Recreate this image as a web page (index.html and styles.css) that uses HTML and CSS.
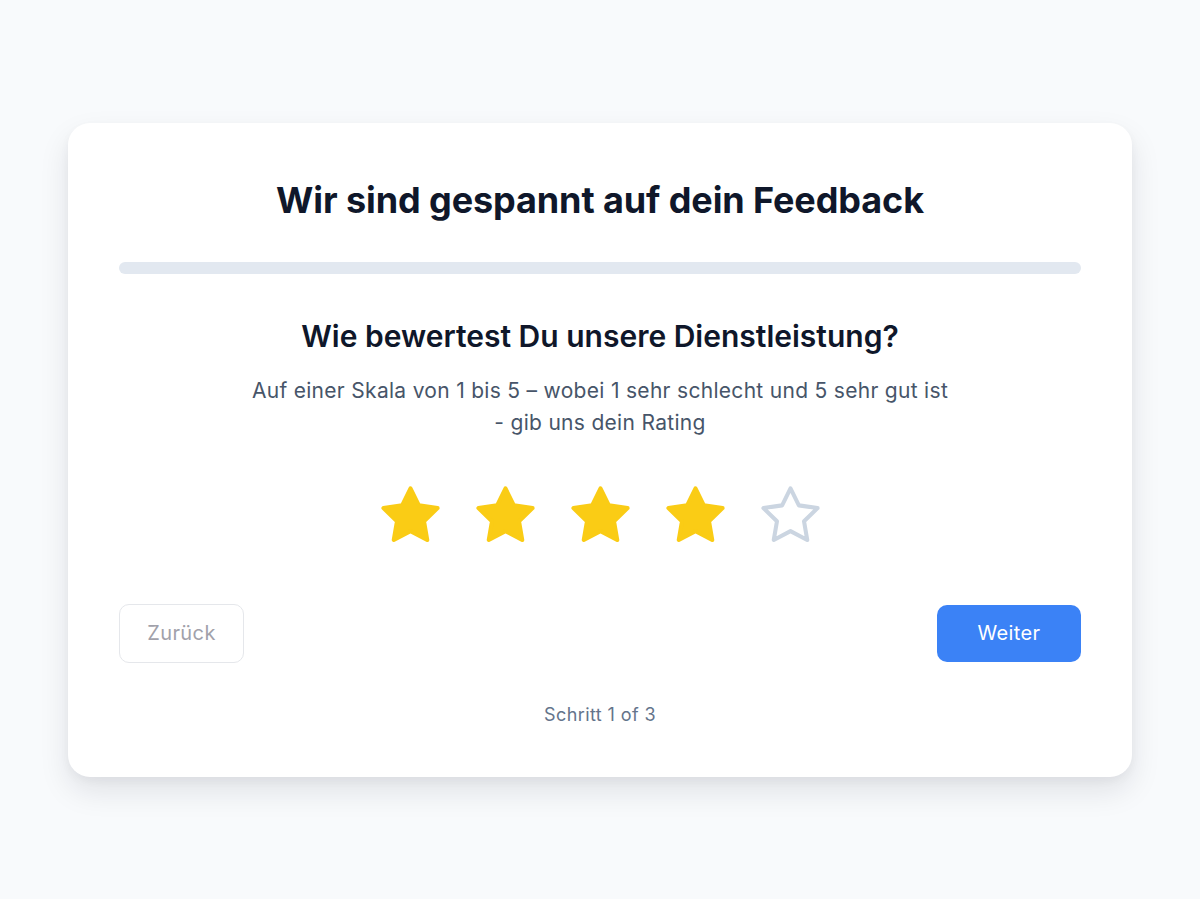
FILE: index.html
```html
<!DOCTYPE html>
<html lang="de">
  <head>
    <meta charset="UTF-8" />
    <meta name="viewport" content="width=device-width, initial-scale=1.0" />
    <title>Feedback</title>
    <link rel="stylesheet" href="styles.css">
  </head>

  <body>
    <main class="feedback-karte">
      <h1 class="titel">Wir sind gespannt auf dein Feedback</h1>

      <!-- Fortschrittsbalken (Schritt 1 noch ohne Füllung) -->
      <div class="fortschritt"><div class="fortschritt-fuellung"></div></div>

      <h2 class="frage">Wie bewertest Du unsere Dienstleistung?</h2>
      <p class="beschreibung">
        Auf einer Skala von 1 bis 5 – wobei 1 sehr schlecht und 5 sehr gut ist
        - gib uns dein Rating
      </p>

      <div class="sterne">
        <svg class="stern aktiv" viewBox="0 0 24 24"><polygon points="12 2 15.09 8.26 22 9.27 17 14.14 18.18 21.02 12 17.77 5.82 21.02 7 14.14 2 9.27 8.91 8.26 12 2" /></svg>
        <svg class="stern aktiv" viewBox="0 0 24 24"><polygon points="12 2 15.09 8.26 22 9.27 17 14.14 18.18 21.02 12 17.77 5.82 21.02 7 14.14 2 9.27 8.91 8.26 12 2" /></svg>
        <svg class="stern aktiv" viewBox="0 0 24 24"><polygon points="12 2 15.09 8.26 22 9.27 17 14.14 18.18 21.02 12 17.77 5.82 21.02 7 14.14 2 9.27 8.91 8.26 12 2" /></svg>
        <svg class="stern aktiv" viewBox="0 0 24 24"><polygon points="12 2 15.09 8.26 22 9.27 17 14.14 18.18 21.02 12 17.77 5.82 21.02 7 14.14 2 9.27 8.91 8.26 12 2" /></svg>
        <svg class="stern" viewBox="0 0 24 24"><polygon points="12 2 15.09 8.26 22 9.27 17 14.14 18.18 21.02 12 17.77 5.82 21.02 7 14.14 2 9.27 8.91 8.26 12 2" /></svg>
      </div>

      <div class="knopf-reihe">
        <button class="knopf zurueck" type="button" disabled>Zurück</button>
        <button class="knopf weiter" type="button">Weiter</button>
      </div>

      <p class="schritt">Schritt 1 of 3</p>
    </main>
  </body>
</html>
```

FILE: styles.css
```css
body {
  margin: 0;
  min-height: 100vh;
  display: flex;
  align-items: center;
  justify-content: center;
  background-color: #f8fafc;
  font-family: Inter, "Noto Sans", sans-serif;
  color: #0f172a;
}

/* Weiße Karte in der Mitte */
.feedback-karte {
  box-sizing: border-box;
  width: 1064px;
  padding: 55px 51px 48px;
  background-color: #ffffff;
  border-radius: 22px;
  box-shadow: 0 14px 30px rgba(15, 23, 42, 0.1), 0 4px 10px rgba(15, 23, 42, 0.04);
  text-align: center;
}

.titel {
  margin: 0;
  font-size: 36px;
  line-height: 44px;
  font-weight: 700;
  letter-spacing: -0.1px;
}

.fortschritt {
  margin-top: 40px;
  height: 12px;
  border-radius: 6px;
  background-color: #e2e8f0;
  overflow: hidden;
}

.fortschritt-fuellung {
  width: 0;
  height: 100%;
  background-color: #3b82f6;
}

.frage {
  margin: 43px 0 0;
  font-size: 30px;
  line-height: 38px;
  font-weight: 600;
}

.beschreibung {
  max-width: 702px;
  margin: 20px auto 0;
  font-size: 21px;
  line-height: 32px;
  letter-spacing: 0.3px;
  color: #475569;
}

.sterne {
  margin-top: 44px;
  display: flex;
  justify-content: center;
  gap: 30px;
}

.stern {
  width: 65px;
  height: 65px;
  fill: none;
  stroke: #cbd5e1;
  stroke-width: 1.5;
  stroke-linejoin: round;
}

.stern.aktiv {
  fill: #facc15;
  stroke: #facc15;
}

.knopf-reihe {
  margin-top: 56px;
  display: flex;
  justify-content: space-between;
  align-items: center;
}

.knopf {
  font-family: inherit;
  font-size: 20px;
  letter-spacing: 0.4px;
  border-radius: 10px;
  cursor: pointer;
}

.zurueck {
  width: 125px;
  height: 59px;
  background-color: #ffffff;
  border: 1.5px solid #e5e7eb;
  color: #a1a1aa;
}

.weiter {
  width: 144px;
  height: 57px;
  background-color: #3b82f6;
  border: none;
  color: #ffffff;
}

.schritt {
  margin: 38px 0 0;
  font-size: 18px;
  line-height: 28px;
  letter-spacing: 0.4px;
  color: #64748b;
}
```
